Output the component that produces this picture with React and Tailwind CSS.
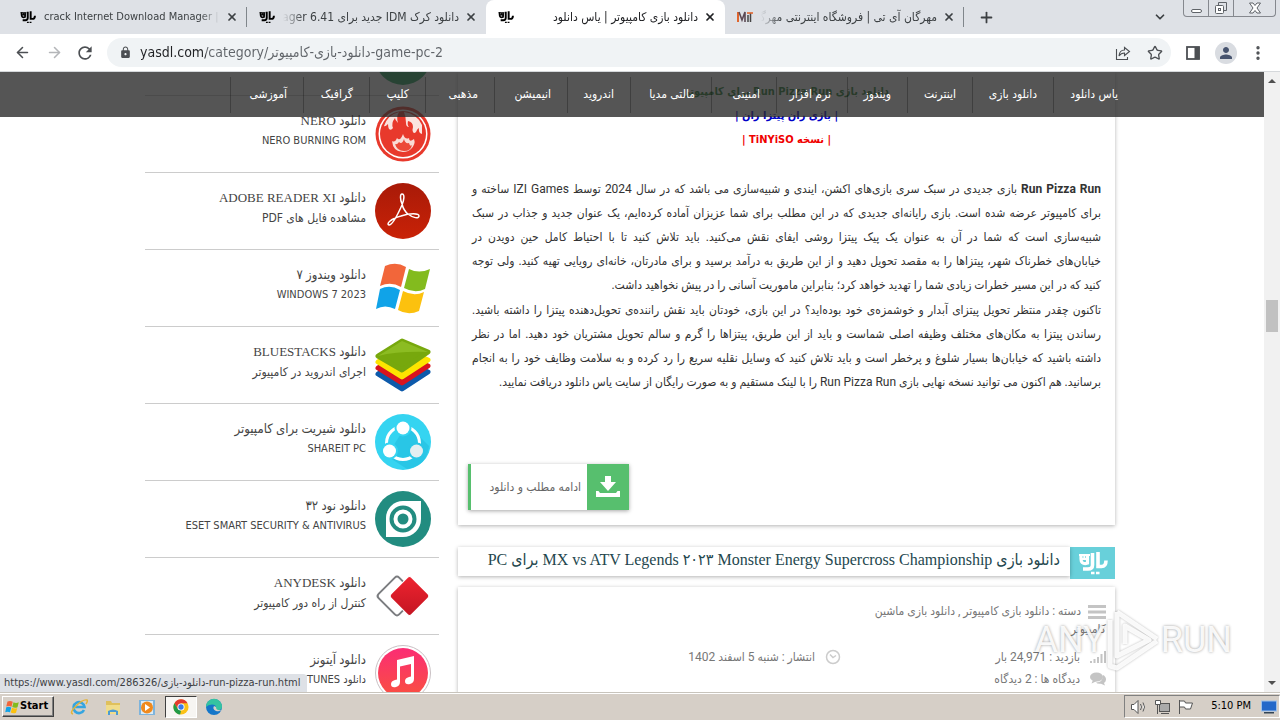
import React from "react";
import { X, Plus, ChevronDown, ArrowLeft, ArrowRight, Star, EllipsisVertical } from "lucide-react";
import { MdLock, MdPerson, MdRefresh } from "react-icons/md";

function YasMark({ className }) {
  return (
    <svg viewBox="0 0 30 24" className={className} fill="none" stroke="currentColor" aria-hidden="true">
      <path d="M3 3v5q0 5 5 4.500L9.500 12V4" strokeWidth="3.200" />
      <path d="M6.300 3v5M1 4h11M3 8h8" strokeWidth="2" />
      <path d="M14.500 2v12q0 4-4.500 4H5" strokeWidth="3.600" />
      <path d="M20 1v14.500h3.500q4.500 0 4.500-6" strokeWidth="3.600" />
      <path d="M13 22h3.500M18 22h3.500" strokeWidth="2.400" />
    </svg>
  );
}

function MitMark() {
  return (
    <svg viewBox="0 0 16 16" className="size-4 shrink-0" fill="none" aria-hidden="true">
      <path d="M1 13V3" stroke="#e0662f" strokeWidth="2" />
      <path d="M2 3l3 8 3-8v10" stroke="#5c4a55" strokeWidth="1.600" />
      <path d="M11 6v7M13.500 4v9" stroke="#444" strokeWidth="1.500" />
      <path d="M10 4h6" stroke="#e0662f" strokeWidth="1.600" />
    </svg>
  );
}

const TABS = [
  { title: "crack Internet Download Manager |", dir: "ltr" },
  { title: "دانلود کرک IDM جدید برای Internet Download Manager 6.41", dir: "rtl" },
  { title: "دانلود بازی کامپیوتر | یاس دانلود", dir: "rtl", active: true },
  { title: "مهرگان آی تی | فروشگاه اینترنتی مهرگان", dir: "rtl", mit: true },
];

function TabStrip() {
  return (
    <div className="flex h-[34px] shrink-0 bg-[#dee1e6] pl-2 text-[#3c4043]">
      {TABS.map((t, i) => (
        <div
          key={i}
          className={
            "flex w-[239px] min-w-0 items-center pl-3 pr-[9px] " +
            (t.active ? "rounded-t-lg bg-white text-[#202124]" : "")
          }
        >
          {t.mit ? <MitMark /> : <YasMark className="h-[14px] w-4 shrink-0 text-black" />}
          <button
            dir={t.dir}
            className={
              "ml-2 mr-1.5 min-w-0 flex-1 overflow-hidden whitespace-nowrap text-start " +
              (t.dir === "rtl"
                ? "text-[12px] [mask-image:linear-gradient(to_right,transparent,black_20px)]"
                : "text-[11px] [mask-image:linear-gradient(to_left,transparent,black_20px)]")
            }
          >
            {t.title}
          </button>
          <button aria-label="Close tab" className="shrink-0">
            <X size={12} strokeWidth={3.5} />
          </button>
          {(i === 0 || i === 3) && <span className="-mr-[9px] ml-2 h-5 w-px bg-[#80868b]" />}
        </div>
      ))}
      <button aria-label="New tab" className="ml-3.5 flex items-center">
        <Plus size={17} strokeWidth={2.5} />
      </button>
      <button aria-label="Search tabs" className="ml-auto mr-4 flex items-center">
        <ChevronDown size={14} strokeWidth={3} />
      </button>
      <div className="mr-1 flex h-[17px] rounded-b border border-t-0 border-[#85888e] text-[#5f6368]">
        <button aria-label="Minimize" className="flex w-[25px] items-end justify-center border-r border-[#85888e] pb-[3px]">
          <span className="h-1 w-[11px] rounded-sm border border-[#5f6368] bg-white" />
        </button>
        <button aria-label="Restore" className="flex w-[25px] items-center justify-center border-r border-[#85888e]">
          <svg viewBox="0 0 14 14" className="size-3.5" fill="none" stroke="currentColor" aria-hidden="true">
            <path d="M4.500 4V1.500h8v8H10" />
            <rect x="1.500" y="4.500" width="8" height="8" rx="1" fill="white" />
            <rect x="4.500" y="7.500" width="2" height="2" />
          </svg>
        </button>
        <button aria-label="Close" className="flex w-[41px] items-center justify-center">
          <svg viewBox="0 0 12 12" className="size-3" fill="white" stroke="currentColor" aria-hidden="true">
            <path d="M.5 1h3.500l2 2.500L8 1h3.500L8 6l3.500 5H8L6 8.500 4 11H.500L4 6z" />
          </svg>
        </button>
      </div>
    </div>
  );
}

function Toolbar() {
  return (
    <div className="flex h-[38px] shrink-0 items-center border-b border-[#d5d8db] bg-white pl-3.5 pr-[13px] text-[#4c4f53]">
      <button aria-label="Back"><ArrowLeft size={17} strokeWidth={2.2} /></button>
      <button aria-label="Forward" className="ml-[15px] text-[#b4b6b9]"><ArrowRight size={17} strokeWidth={2.2} /></button>
      <button aria-label="Reload" className="ml-3"><MdRefresh size={20} /></button>
      <div className="ml-3 flex h-[29px] flex-1 items-center rounded-full bg-[#f0f3f5] pl-3 pr-2">
        <MdLock size={13} className="shrink-0" />
        <input
          aria-label="Address"
          dir="ltr"
          readOnly
          value="yasdl.com/category/دانلود-بازی-کامپیوتر-game-pc-2"
          className="ml-2 min-w-0 flex-1 bg-[linear-gradient(to_right,#202124_66px,#5f6368_66px)] bg-clip-text text-[14px] text-transparent outline-none"
        />
        <button aria-label="Share">
          <svg viewBox="0 0 16 16" className="size-4" fill="none" stroke="currentColor" strokeWidth="1.100" aria-hidden="true">
            <path d="M1.500 4v10.500h11V12M9.500 2.500l5 4-5 4V8Q6 8 4 11q.5-6 5.500-6z" />
          </svg>
        </button>
        <button aria-label="Bookmark" className="ml-4"><Star size={16} strokeWidth={2} /></button>
      </div>
      <button aria-label="Side panel" className="ml-[15px]">
        <svg viewBox="0 0 14 14" className="size-3.5" aria-hidden="true">
          <rect x="1" y="1" width="12" height="12" fill="none" stroke="currentColor" strokeWidth="1.800" />
          <rect x="8.500" y="1" width="5" height="12" fill="currentColor" />
        </svg>
      </button>
      <button aria-label="Profile" className="ml-[15px] flex size-[22px] items-center justify-center rounded-full bg-[#d9dce1] text-[#46536e]">
        <MdPerson size={18} />
      </button>
      <button aria-label="Menu" className="ml-3"><EllipsisVertical size={18} strokeWidth={2.5} /></button>
    </div>
  );
}

const NAV = [
  ["یاس دانلود", "w-[81px]"],
  ["دانلود بازی", "w-[81px]"],
  ["اینترنت", "w-[65px]"],
  ["ویندوز", "w-[60px]"],
  ["نرم افزار", "w-[71px]"],
  ["امنیتی", "w-[65px]"],
  ["مالتی مدیا", "w-[81px]"],
  ["اندروید", "w-[63px]"],
  ["انیمیشن", "w-[73px]"],
  ["مذهبی", "w-[69px]"],
  ["کلیپ", "w-[56px]"],
  ["گرافیک", "w-[66px]"],
  ["آموزشی", "w-[73px]"],
];

function SiteNav() {
  return (
    <nav className="absolute inset-x-0 top-0 z-10 bg-[#2b2b2b]/80">
      <ul className="mx-auto flex h-[45px] w-[1004px] max-w-full items-center">
        {NAV.map(([label, w]) => (
          <li key={label} className={"flex h-9 shrink-0 items-center border-l border-black/25 pb-0.5 pr-4 " + w}>
            <a href="#nav" className="whitespace-nowrap text-[12px] text-white">{label}</a>
          </li>
        ))}
      </ul>
    </nav>
  );
}

const icon = "size-14 shrink-0";

const Nero = () => (
  <svg viewBox="0 0 56 56" className={icon} aria-hidden="true">
    <circle cx="28" cy="28" r="27.500" fill="#e8392c" />
    <circle cx="28" cy="28" r="24.500" fill="#fff" />
    <circle cx="28" cy="28" r="23" fill="#e8392c" />
    <path d="M9 20A21 21 0 0124 6q-3 5-1 11-3-3-3-5-4 5-2 10-2 3-4 1-1-2-1-5-3 3-4 2zM29 6a21 21 0 0118 13v9q-4-1-3-6-2 1-3 4-2 2-3 0-1-2 0-5 0-5-5-6-1 4 1 6-3 0-3-4 0-6-2-11z" fill="#fbe3de" />
    <path d="M17 35q3 2 5-3 3 4 6-4 2 6 6 4 0 5 5 1 2 5-3 10-3 3-8 3-10 0-11-11z" fill="#f9dcd6" />
    <path d="M20 38q2 1 4-2 3 3 5-3 1 5 5 4 1 4 3 2-1 6-8 6t-9-7z" fill="#ec4a38" />
  </svg>
);

const Adobe = () => (
  <svg viewBox="0 0 56 56" className={icon} aria-hidden="true">
    <defs>
      <linearGradient id="adobe" x1="0" y1="0" x2="0" y2="1">
        <stop offset="0" stopColor="#a81a08" /><stop offset="1" stopColor="#c92207" />
      </linearGradient>
    </defs>
    <circle cx="28" cy="28" r="28" fill="url(#adobe)" />
    <path d="M27 21c-2-5-2-10 0-10 3 0 2 6 0 11-4 9-10 20-13 20-3-1 1-6 12-9 9-3 18-3 18 0s-6 2-11-2c-4-3-5-6-6-10z" fill="none" stroke="#fff" strokeWidth="1.500" />
  </svg>
);

const Windows = ({ className = icon }) => (
  <svg viewBox="0 0 56 56" className={className} aria-hidden="true">
    <path d="M10 6q11-5 21 1l-5 20q-10-6-21-1z" fill="#f2663a" />
    <path d="M34 9q10 5 21 0l-5 20q-10 5-21-1z" fill="#83bb1e" />
    <path d="M5 29q10-5 20 1l-5 19Q10 44 1 49z" fill="#10a3e8" />
    <path d="M28 31q11 6 21 1l-5 19q-11 5-21-1z" fill="#fcc10e" />
  </svg>
);

const BlueStacks = () => (
  <svg viewBox="0 0 56 56" className={icon} aria-hidden="true">
    <g strokeLinejoin="round" strokeWidth="5">
      <path d="M3 37l25-13 25 11-26 17z" fill="#0d5aab" stroke="#0d5aab" />
      <path d="M3 31l25-13 25 11-26 17z" fill="#d8131f" stroke="#d8131f" />
      <path d="M3 25l25-13 25 11-26 17z" fill="#fde500" stroke="#fde500" />
      <path d="M3 19L27 4l26 11-26 18z" fill="#77a80d" stroke="#77a80d" />
    </g>
    <path d="M3 19L27 4l26 11q-30-1-50 4z" fill="#8cbc22" />
  </svg>
);

const ShareIt = () => (
  <svg viewBox="0 0 56 56" className={icon} aria-hidden="true">
    <circle cx="28" cy="28" r="28" fill="#35d4f1" />
    <path d="M32 10l22 22q-2 20-22 23L12 42z" fill="#29c6e6" />
    <circle cx="28" cy="29" r="16.500" fill="none" stroke="#fff" strokeWidth="3" />
    <circle cx="28" cy="14" r="8.500" fill="#35d4f1" />
    <circle cx="14.500" cy="37" r="8.500" fill="#35d4f1" />
    <circle cx="41.500" cy="37" r="8.500" fill="#29c6e6" />
    <circle cx="28" cy="14" r="6.500" fill="#fff" />
    <circle cx="14.500" cy="37" r="6.500" fill="#fff" />
    <circle cx="41.500" cy="37" r="6.500" fill="#e3eef1" />
  </svg>
);

const Eset = () => (
  <svg viewBox="0 0 56 56" className={icon} aria-hidden="true">
    <circle cx="28" cy="28" r="28" fill="#228c80" />
    <path d="M11 46V27a17 17 0 0117-17h18v18a18 18 0 01-18 18z" fill="#fff" />
    <circle cx="28" cy="28" r="11.500" fill="#fff" stroke="#228c80" strokeWidth="4" />
    <circle cx="28" cy="28" r="5.500" fill="#228c80" />
  </svg>
);

const AnyDesk = () => (
  <svg viewBox="0 0 56 56" className={icon} aria-hidden="true">
    <defs>
      <linearGradient id="desk" x1="0" y1="0" x2="1" y2="1">
        <stop offset="0" stopColor="#ef2430" /><stop offset="1" stopColor="#c31522" />
      </linearGradient>
    </defs>
    <rect x="7.500" y="13.500" width="29" height="29" rx="3" transform="rotate(45 22 28)" fill="none" stroke="#7b7d80" strokeWidth="2" />
    <rect x="20" y="13.500" width="29" height="29" rx="3" transform="rotate(45 34.500 28)" fill="url(#desk)" stroke="#fff" strokeWidth="1" />
  </svg>
);

const ITunes = () => (
  <svg viewBox="0 0 56 56" className={icon} aria-hidden="true">
    <defs>
      <linearGradient id="tunes" x1="0" y1="0" x2="0" y2="1">
        <stop offset="0" stopColor="#fb2d74" /><stop offset="1" stopColor="#f9503f" />
      </linearGradient>
    </defs>
    <circle cx="28" cy="28" r="27.500" fill="#fff" stroke="#c9c0c4" />
    <circle cx="28" cy="28" r="25" fill="url(#tunes)" />
    <path d="M22 15l17-4v23q0 4-4 5-5 1-5-3 0-3 4-4l2-.500V19l-11 2.500V37q0 4-4 5-5 1-5-3 0-3 4-4l2-.500z" fill="#fff" />
  </svg>
);

const LATIN = "text-[11px]";
const PERSIAN = "text-[12px]";

const APPS = [
  [Nero, "دانلود NERO", "NERO BURNING ROM", LATIN],
  [Adobe, "دانلود ADOBE READER XI", "مشاهده فایل های PDF", PERSIAN],
  [Windows, "دانلود ویندوز ۷", "WINDOWS 7 2023", LATIN],
  [BlueStacks, "دانلود BLUESTACKS", "اجرای اندروید در کامپیوتر", PERSIAN],
  [ShareIt, "دانلود شیریت برای کامپیوتر", "SHAREIT PC", LATIN],
  [Eset, "دانلود نود ۳۲", "ESET SMART SECURITY & ANTIVIRUS", LATIN],
  [AnyDesk, "دانلود ANYDESK", "کنترل از راه دور کامپیوتر", PERSIAN],
  [ITunes, "دانلود آیتونز", "دانلود ITUNES", LATIN],
];

function Sidebar() {
  return (
    <aside className="w-[294px] shrink-0">
      <div className="flex h-6 items-end overflow-hidden border-b border-[#ccc] pb-2.5 pr-2">
        <span className="size-14 shrink-0 rounded-full bg-[#22a35c]" />
      </div>
      <ul>
        {APPS.map(([Icon, title, sub, size]) => (
          <li key={title} className="h-[77px] border-b border-[#ccc]">
            <a href="#app" className="flex gap-[9px] pr-2 pt-2.5">
              <Icon />
              <span className="flex flex-col pt-[5px] text-[#444]">
                <span className="font-[Liberation_Serif,DejaVu_Sans_Condensed,serif] text-[13px] leading-5">{title}</span>
                <span className={"leading-5 " + size}>{sub}</span>
              </span>
            </a>
          </li>
        ))}
      </ul>
    </aside>
  );
}

const PARA_1 = [
  <><b>Run Pizza Run</b> بازی جدیدی در سبک سری بازی‌های اکشن، ایندی و شبیه‌سازی می باشد که در سال 2024 توسط IZI Games ساخته و</>,
  "برای کامپیوتر عرضه شده است. بازی رایانه‌ای جدیدی که در این مطلب برای شما عزیزان آماده کرده‌ایم، یک عنوان جدید و جذاب در سبک",
  "شبیه‌سازی است که شما در آن به عنوان یک پیک پیتزا روشی ایفای نقش می‌کنید. باید تلاش کنید تا با احتیاط کامل حین دویدن در",
  "خیابان‌های خطرناک شهر، پیتزاها را به مقصد تحویل دهید و از این طریق به درآمد برسید و برای مادرتان، خانه‌ای رویایی تهیه کنید. ولی توجه",
  "کنید که در این مسیر خطرات زیادی شما را تهدید خواهد کرد؛ بنابراین ماموریت آسانی را در پیش نخواهید داشت.",
];
const PARA_2 = [
  "تاکنون چقدر منتظر تحویل پیتزای آبدار و خوشمزه‌ی خود بوده‌اید؟ در این بازی، خودتان باید نقش راننده‌ی تحویل‌دهنده پیتزا را داشته باشید.",
  "رساندن پیتزا به مکان‌های مختلف وظیفه اصلی شماست و باید از این طریق، پیتزاها را گرم و سالم تحویل مشتریان خود دهید. اما در نظر",
  "داشته باشید که خیابان‌ها بسیار شلوغ و پرخطر است و باید تلاش کنید که وسایل نقلیه سریع را رد کرده و به سلامت وظایف خود را به انجام",
  "برسانید. هم اکنون می توانید نسخه نهایی بازی Run Pizza Run را با لینک مستقیم و به صورت رایگان از سایت یاس دانلود دریافت نمایید.",
];

function Para({ lines }) {
  return (
    <p className="font-[Roboto,DejaVu_Sans_Condensed,sans-serif] text-[12px] leading-6 text-[#333]">
      {lines.map((l, i) => (
        <span
          key={i}
          className={"block whitespace-nowrap " + (i < lines.length - 1 ? "[text-align-last:justify]" : "")}
        >
          {l}
        </span>
      ))}
    </p>
  );
}

const card = "bg-white shadow-[0_1px_4px_rgba(0,0,0,0.3)] ";

function Posts() {
  return (
    <main className="min-w-0 flex-1">
      <article className={card + "px-3.5 pb-[15px] pt-2"}>
        <div className="text-center text-[11px] font-bold leading-6">
          <h2 className="text-[#1d7a2b]">دانلود بازی Run Pizza Run برای کامپیوتر</h2>
          <p className="text-[#0000c8]">| بازی ران پیتزا ران |</p>
          <p className="text-[#f00000]">| نسخه TiNYiSO |</p>
        </div>
        <div className="mt-[25px] flex flex-col gap-px">
          <Para lines={PARA_1} />
          <Para lines={PARA_2} />
        </div>
        <div className="-ml-1 mt-[70px] flex justify-end">
          <a href="#more" className="flex h-[46px] w-[161px] border-l-[3px] border-[#57bf6e] bg-white shadow-[0_1px_4px_rgba(0,0,0,0.35)]">
            <span className="flex w-[42px] items-center justify-center bg-[#57bf6e]">
              <svg viewBox="0 0 24 22" className="h-[22px] w-6" fill="#fff" aria-hidden="true">
                <path d="M9 0h6v6h5l-8 9-8-9h5zM0 15h2.500l1.500 2h16l1.500-2H24v6H0z" />
              </svg>
            </span>
            <span className="flex items-center pr-1.5 text-[12px] text-[#666]">ادامه مطلب و دانلود</span>
          </a>
        </div>
      </article>

      <header className="mt-[22px] flex items-start">
        <span className="flex h-8 w-[45px] items-center justify-center bg-[#68d0da] text-white">
          <YasMark className="h-6 w-[30px]" />
        </span>
        <h2 className={card + "h-[29px] flex-1 whitespace-nowrap pr-2.5 font-[Liberation_Serif,DejaVu_Sans_Condensed,serif] text-[16px] leading-[26px] text-[#24474e]"}>
          دانلود بازی MX vs ATV Legends ۲۰۲۳ Monster Energy Supercross Championship برای PC
        </h2>
      </header>

      <article className={card + "mt-2 grid h-48 grid-cols-[265px_1fr] content-start gap-y-1 px-[9px] pt-[15px] font-[Roboto,DejaVu_Sans_Condensed,sans-serif] text-[12px] leading-[18px] text-[#777]"}>
        <p className="col-span-2 mb-1.5">
          <svg viewBox="0 0 18 14" className="ml-[7px] inline h-3.5 w-[18px]" fill="#c4c4c4" aria-hidden="true">
            <path d="M0 0h18v3H0zM0 5.500h18v3H0zM0 11h18v3H0z" />
          </svg>
          دسته : دانلود بازی کامپیوتر , دانلود بازی ماشین
          <br />
          کامپیوتر
        </p>
        <p className="flex items-center gap-2.5">
          <svg viewBox="0 0 16 12" className="h-3 w-4" fill="#c4c4c4" aria-hidden="true">
            <path d="M0 10h2v2H0zM3.500 8h2v4h-2zM7 6h2v6H7zM10.500 3h2v9h-2zM14 0h2v12h-2z" />
          </svg>
          بازدید : 24,971 بار
        </p>
        <p className="flex items-center gap-2.5">
          <svg viewBox="0 0 16 16" className="size-4" fill="none" stroke="#ccc" strokeWidth="1.500" aria-hidden="true">
            <circle cx="8" cy="8" r="6.500" /><path d="M5 5.500l3 3 3-2" />
          </svg>
          انتشار : شنبه 5 اسفند 1402
        </p>
        <p className="flex items-center gap-2.5">
          <svg viewBox="0 0 16 14" className="h-3.5 w-4" fill="#c4c4c4" aria-hidden="true">
            <ellipse cx="6.500" cy="5" rx="6.500" ry="4.500" /><path d="M3 8l-1.500 3.500L7 9z" />
            <path d="M13 3q3 1.500 3 4.500 0 2-2 3.500l1 2.500-4-1.800Q7 12 6 10.500q7 0 7-7.500z" />
          </svg>
          دیدگاه ها : 2 دیدگاه
        </p>
      </article>
    </main>
  );
}

function Scrollbar() {
  return (
    <div className="flex w-4 shrink-0 flex-col items-center bg-[#f1f1f1] text-[#505050]">
      <svg viewBox="0 0 16 17" className="h-[17px] w-4" fill="currentColor" aria-hidden="true"><path d="M4 11l4-4 4 4z" /></svg>
      <span className="grow-[211]" />
      <span className="h-8 w-3 bg-[#c1c1c1]" />
      <span className="grow-[344]" />
      <svg viewBox="0 0 16 17" className="h-[17px] w-4" fill="currentColor" aria-hidden="true"><path d="M4 6l4 4 4-4z" /></svg>
    </div>
  );
}

function Watermark() {
  return (
    <div className="pointer-events-none absolute bottom-5 right-12 z-20 flex items-center font-[Roboto,sans-serif] text-[36px] leading-none text-white/90 [text-shadow:0_0_3px_rgba(0,0,0,0.4)]">
      <span>ANY</span>
      <svg viewBox="0 0 56 64" className="h-16 w-14 drop-shadow-[0_0_1px_rgba(0,0,0,0.3)]" fill="none" stroke="#fff" strokeOpacity="0.9" strokeWidth="5" aria-hidden="true">
        <path d="M5 12v46l7 2 40-27M12 4l40 27M12 4v44l32-16-24-14v18" strokeLinejoin="round" />
      </svg>
      <span>RUN</span>
    </div>
  );
}

function Taskbar() {
  return (
    <footer className="flex h-7 shrink-0 items-center border-t border-[#c8c4bc] bg-[#d6cfc7] pl-0.5 text-[11px] text-black shadow-[inset_0_1px_0_white]">
      <button className="flex h-[21px] w-[52px] items-center gap-px border border-b-[#404040] border-l-white border-r-[#404040] border-t-white px-0.5 font-bold shadow-[inset_-1px_-1px_0_#808080]">
        <Windows className="size-3.5 shrink-0" />
        Start
      </button>
      <button aria-label="Internet Explorer" className="ml-4">
        <svg viewBox="0 0 18 18" className="size-[18px]" fill="none" aria-hidden="true">
          <path d="M14 12a5.500 5.500 0 11.500-3H5" stroke="#35a5e0" strokeWidth="2.600" />
          <path d="M3 16Q-1 15 6 8T17 2q1 1-1 4" stroke="#e5b437" strokeWidth="1.500" />
        </svg>
      </button>
      <button aria-label="Explorer" className="ml-4">
        <svg viewBox="0 0 18 18" className="size-[18px]" aria-hidden="true">
          <path d="M2 3h5l1 2h8v11H2z" fill="#dfc05c" /><path d="M2 7h14v9H2z" fill="#f0dc8a" />
          <path d="M4 17v-4q5-3 10 0v4h-2v-3H6v3z" fill="#4b9bd2" />
        </svg>
      </button>
      <button aria-label="Media Player" className="ml-4">
        <svg viewBox="0 0 18 18" className="size-[18px]" aria-hidden="true">
          <rect x="1" y="2" width="16" height="15" fill="#7eb4dc" /><rect x="3" y="3" width="12" height="13" fill="#dcebf5" />
          <circle cx="9" cy="9.500" r="6" fill="#f08a1d" /><path d="M7 6l5 3.500L7 13z" fill="#fff" />
        </svg>
      </button>
      <button aria-label="Chrome" className="ml-[9px] flex h-[22px] w-8 items-center justify-center border border-b-white border-l-[#404040] border-r-white border-t-[#404040] bg-[#f7f5f2]">
        <svg viewBox="0 0 18 18" className="size-4" aria-hidden="true">
          <circle cx="9" cy="9" r="8.500" fill="#fbc116" />
          <path d="M1.600 4.700A8.500 8.500 0 0116.400 4.700H9L5.300 11z" fill="#e33b2e" />
          <path d="M1.600 4.700L5.300 11 9 13.300l-1 4.200A8.500 8.500 0 011.600 4.700z" fill="#229a47" />
          <circle cx="9" cy="9" r="4" fill="#fff" /><circle cx="9" cy="9" r="3" fill="#3a7be8" />
        </svg>
      </button>
      <button aria-label="Edge" className="ml-2">
        <svg viewBox="0 0 18 18" className="size-[18px]" aria-hidden="true">
          <circle cx="9" cy="9" r="8" fill="#1476c9" /><path d="M1 9a8 8 0 0116-.5q0 4-5 4-2-1-1-3 0-3-4-3-4 0-6 2.500z" fill="#35c3a1" />
          <path d="M9 8q-2 3 2 5 3 1 6-1-6 1-6-3z" fill="#d6cfc7" />
        </svg>
      </button>
      <div className="ml-auto flex h-[23px] items-center border border-b-white border-l-[#808080] border-r-white border-t-[#808080] pl-1.5 pr-0.5">
        <svg viewBox="0 0 66 16" className="h-4 w-[66px]" fill="#fff" stroke="#555" aria-hidden="true">
          <path d="M.5 5.500H3l4-4v13l-4-4H.500zM9.500 5q2 3 0 6M12 3.500q3 4.500 0 9" />
          <rect x="28.500" y="4.500" width="10" height="8" fill="#aaa" /><path d="M24.500 1.500h5v4h-5zM26.500 6v9M30 14.500h8" />
          <path d="M48.500 1v14M48.500 2h5l1 2h7l-2 6h-5l-1-2h-5z" />
        </svg>
        <time className="ml-3.5">5:10 PM</time>
        <svg viewBox="0 0 16 14" className="ml-2.5 h-3.5 w-4" aria-hidden="true">
          <rect x=".5" y="1" width="15" height="10" fill="#2468c9" stroke="#9cc0ea" /><path d="M3 12h10v1.500H3z" fill="#345" />
        </svg>
      </div>
    </footer>
  );
}

export default function App() {
  return (
    <div className="flex h-screen flex-col overflow-hidden bg-white font-[DejaVu_Sans_Condensed,Noto_Sans,sans-serif]">
      <TabStrip />
      <Toolbar />
      <div className="relative flex min-h-0 flex-1">
        <div dir="rtl" className="relative min-w-0 flex-1 overflow-hidden">
          <SiteNav />
          <div className="mx-auto flex w-[974px] max-w-full gap-[19px] pr-1">
            <Posts />
            <Sidebar />
          </div>
        </div>
        <Scrollbar />
        <div dir="ltr" className="absolute bottom-0 left-0 z-10 h-[18px] rounded-tr-sm bg-[#dee1e6] px-1 pr-[7px] text-[11px] leading-[18px] text-[#3c4043]">
          https://www.yasdl.com/286326/دانلود-بازی-run-pizza-run.html
        </div>
        <Watermark />
      </div>
      <Taskbar />
    </div>
  );
}
